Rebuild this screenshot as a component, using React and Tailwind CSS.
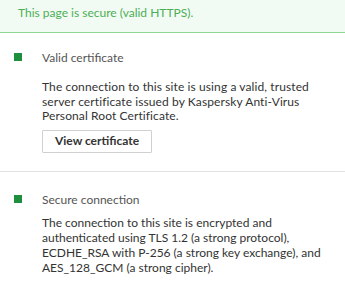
import React from 'react';

const font = { fontFamily: 'Lato, "Liberation Sans", sans-serif' };

const Section = ({ title, children }) => (
  <div className="flex px-[14px]">
    <div className="w-[28px] shrink-0 pt-[3px]">
      <div className="w-[8px] h-[8px] bg-[#1f8f3f]" />
    </div>
    <div className="flex-1">
      <p className="text-[12px] leading-[15px] text-[#555]">{title}</p>
      {children}
    </div>
  </div>
);

export default function App() {
  return (
    <div className="w-[345px] h-[288px] bg-white overflow-hidden" style={font}>
      {/* Header */}
      <div className="h-[33px] bg-[#f1fbf3] border-b border-[#8fd694] px-[18px] flex items-center">
        <span className="text-[12px] text-[#4cae56] -mt-[7px]">This page is secure (valid HTTPS).</span>
      </div>

      {/* Valid certificate */}
      <div className="pt-[17px] pb-[18px] border-b border-[#e2e2e2]">
        <Section title="Valid certificate">
          <p className="mt-[15px] text-[12px] leading-[14.5px] text-[#333] tracking-[0.1px]">
            The connection to this site is using a valid, trusted<br />
            server certificate issued by Kaspersky Anti-Virus<br />
            Personal Root Certificate.
          </p>
          <button className="block mt-[6px] w-[110px] h-[23px] border border-[#d0d0d0] bg-white text-[12px] font-bold text-[#333] rounded-[1px]">
            View certificate
          </button>
        </Section>
      </div>

      {/* Secure connection */}
      <div className="pt-[20px]">
        <Section title="Secure connection">
          <p className="mt-[8px] text-[12px] leading-[15px] text-[#333]">
            The connection to this site is encrypted and<br />
            authenticated using TLS 1.2 (a strong protocol),<br />
            ECDHE_RSA with P-256 (a strong key exchange), and<br />
            AES_128_GCM (a strong cipher).
          </p>
        </Section>
      </div>
    </div>
  );
}
